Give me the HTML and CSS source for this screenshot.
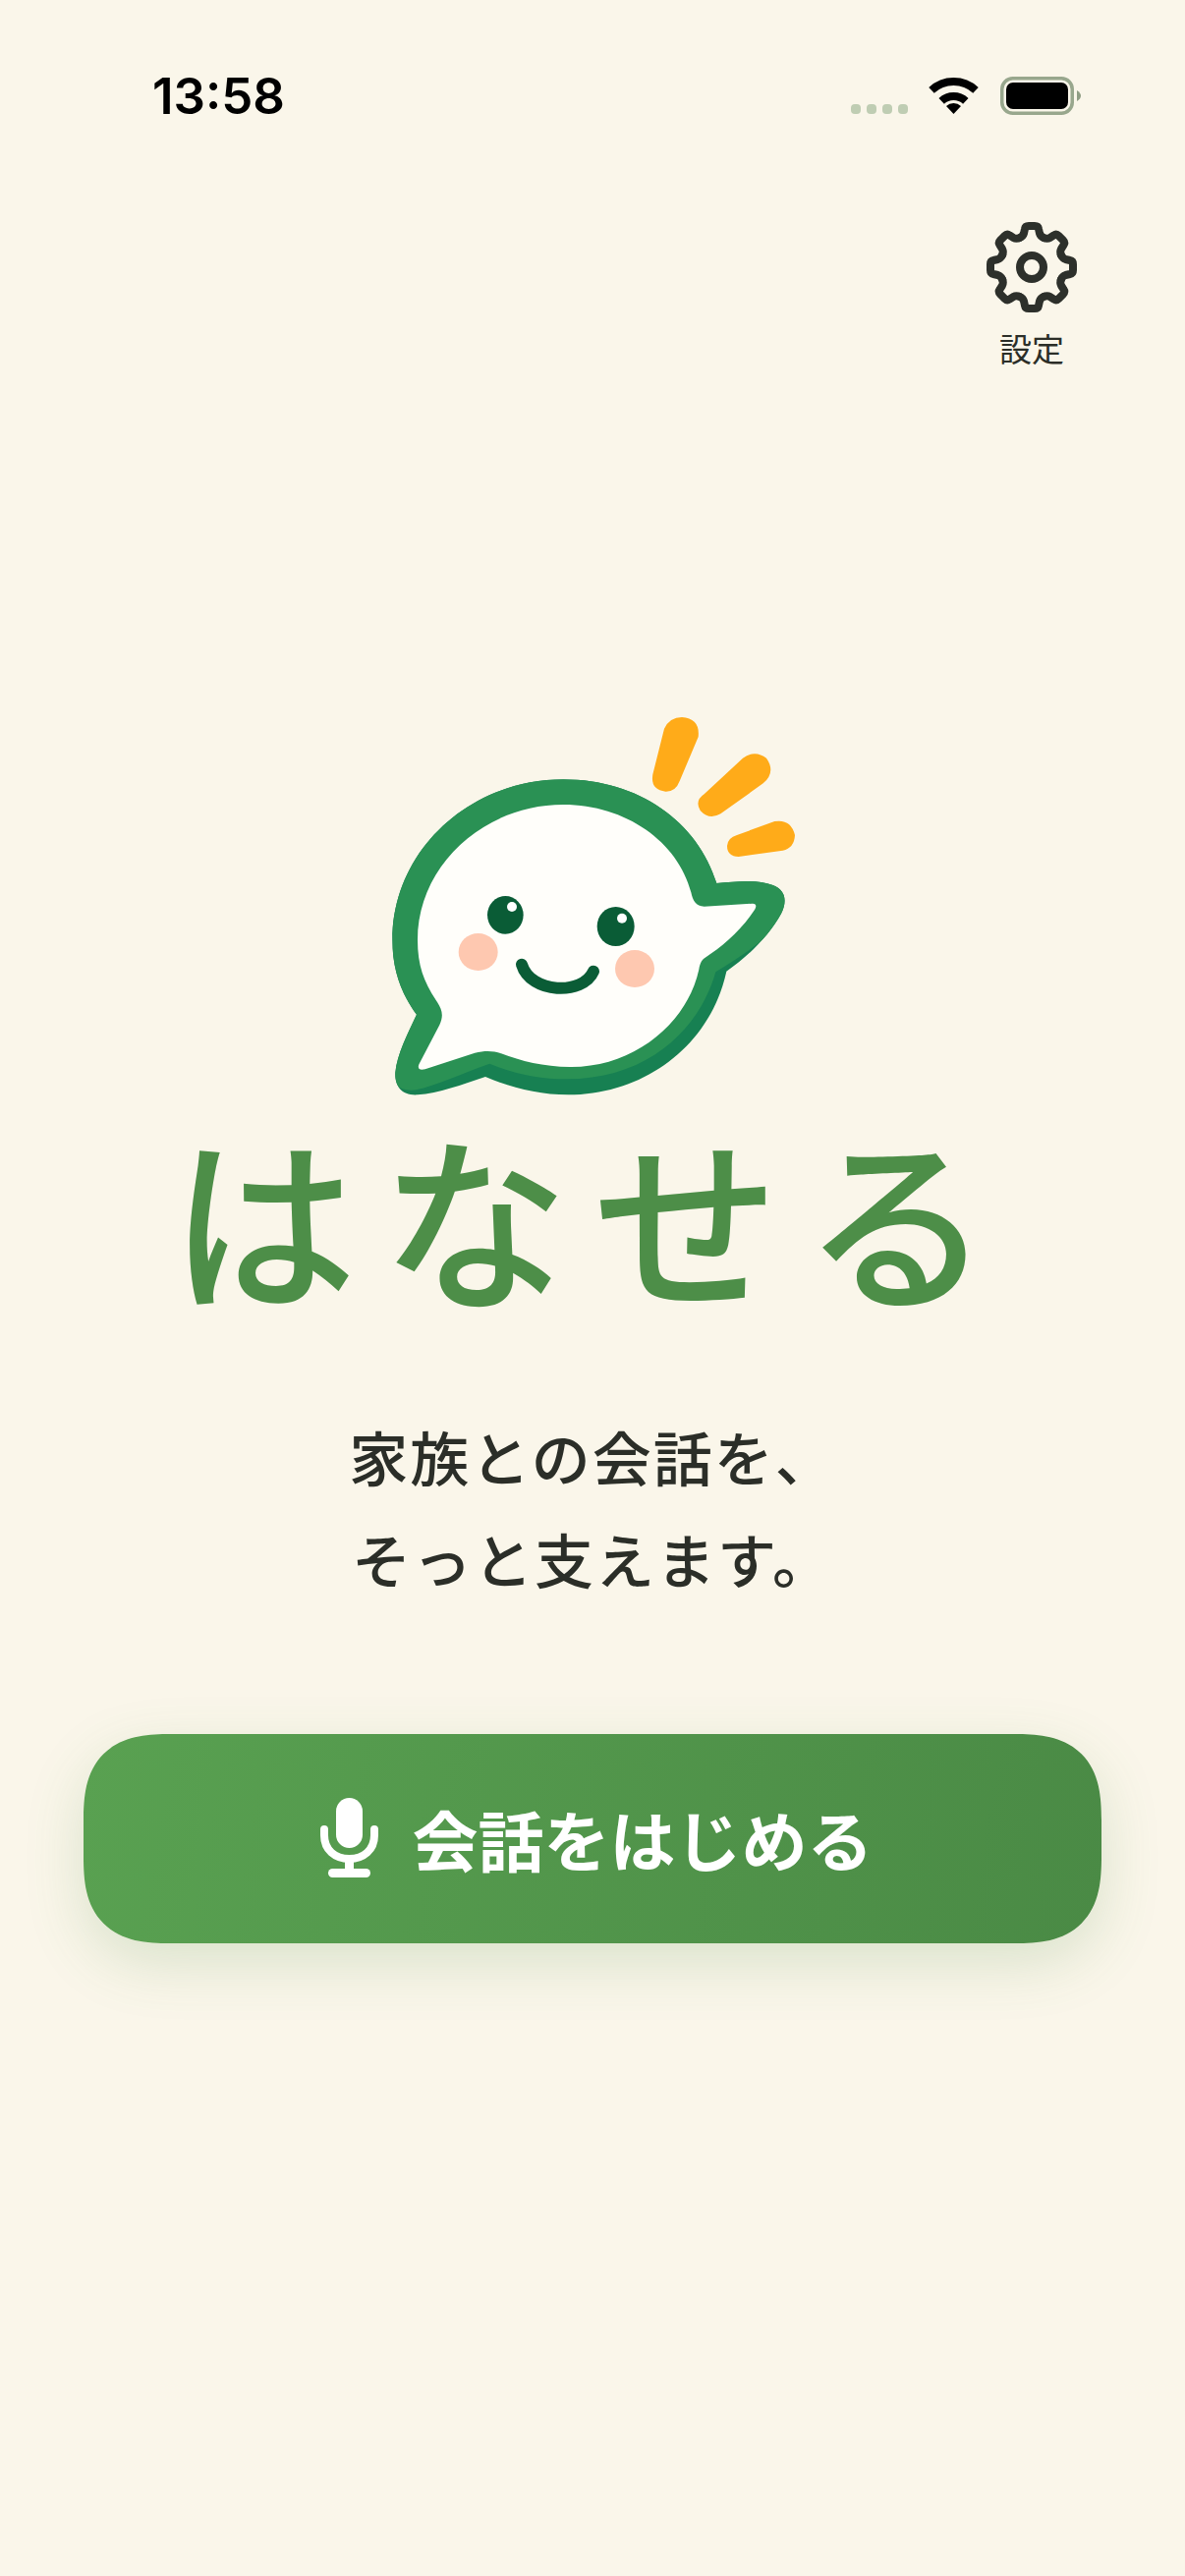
FILE: index.html
```html
<!DOCTYPE html>
<html lang="ja">
<head>
<meta charset="UTF-8">
<meta name="viewport" content="width=device-width, initial-scale=1.0">
<title>はなせる</title>
<link rel="stylesheet" href="styles.css">
</head>
<body>
<div class="screen">
  <div class="status-bar">
    <span class="time">13:58</span>
    <div class="status-icons">
      <div class="signal"><i></i><i></i><i></i><i></i></div>
      <svg class="wifi" viewBox="0 0 51 37">
        <path d="M3 12.9A33 33 0 0 1 48 12.9" fill="none" stroke="#000" stroke-width="8"/>
        <path d="M13.2 23.8A18 18 0 0 1 37.8 23.8" fill="none" stroke="#000" stroke-width="8"/>
        <path d="M25.5 37L18 29A11 11 0 0 1 33 29Z" fill="#000"/>
      </svg>
      <svg class="battery" viewBox="0 0 82 39">
        <rect x="1.75" y="1.75" width="71.5" height="35.5" rx="11" fill="none" stroke="#98a78d" stroke-width="3.5"/>
        <rect x="6" y="6" width="63" height="27" rx="7" fill="#000"/>
        <path d="M78 14Q82 16.500 82 19.500Q82 22.500 78 25Z" fill="#8f9d84"/>
      </svg>
    </div>
  </div>

  <div class="toolbar">
    <button class="settings-btn" type="button">
      <svg class="gear" viewBox="0 0 100 100">
        <defs>
          <path id="tooth" d="M37.600 20.100Q41 18.700 42 15.500L43 11Q43.500 8 47 8L53 8Q56.500 8 57 11L58 15.500Q59 18.700 62.400 20.100"/>
        </defs>
        <g fill="none" stroke="#2d302b" stroke-width="8" stroke-linecap="round" stroke-linejoin="round">
          <use href="#tooth"/>
          <use href="#tooth" transform="rotate(45 50 50)"/>
          <use href="#tooth" transform="rotate(90 50 50)"/>
          <use href="#tooth" transform="rotate(135 50 50)"/>
          <use href="#tooth" transform="rotate(180 50 50)"/>
          <use href="#tooth" transform="rotate(225 50 50)"/>
          <use href="#tooth" transform="rotate(270 50 50)"/>
          <use href="#tooth" transform="rotate(315 50 50)"/>
          <circle cx="50" cy="50" r="12"/>
        </g>
      </svg>
      <span class="settings-label">設定</span>
    </button>
  </div>

  <main class="hero">
    <svg class="logo" viewBox="0 0 1440 1320">
      <defs>
        <path id="bubbleOuter" d="M640 280C870 280 1050 410 1108 597C1170 592 1230 584 1280 603C1318 618 1325 650 1305 690C1270 755 1205 820 1138 866C1090 1090 890 1243 655 1243C565 1243 480 1222 402 1188C330 1212 260 1238 195 1243C145 1246 125 1215 127 1175C132 1120 165 1055 192 998C145 935 118 860 118 770C118 500 350 280 640 280Z"/>
        <clipPath id="bubbleClip"><use href="#bubbleOuter"/></clipPath>
      </defs>
      <path d="M948 125Q965 90 1002 90Q1058 94 1052 150L995 285Q983 318 952 317Q905 312 913 265Z" fill="#ffab19"/>
      <path d="M1188 215Q1225 188 1260 215Q1290 258 1250 292L1120 385Q1085 405 1058 375Q1040 345 1070 325Z" fill="#ffab19"/>
      <path d="M1170 450L1285 408Q1335 400 1347 450Q1345 490 1310 497L1175 516Q1140 515 1140 483Q1142 458 1170 450Z" fill="#ffab19"/>
      <use href="#bubbleOuter" fill="#178052"/>
      <path clip-path="url(#bubbleClip)" d="M100 200H1360V640C1320 730 1200 810 1105 868C1060 1030 910 1195 650 1195C570 1195 490 1180 415 1148C330 1178 250 1215 190 1228C160 1232 140 1225 120 1205Z" fill="#2a9154"/>
      <path d="M640 357C830 357 990 470 1030 625C1035 650 1045 668 1070 668L1218 659C1230 659 1230 668 1224 678C1180 745 1125 790 1072 825C1060 833 1057 845 1054 860C1020 1020 860 1160 660 1158C580 1158 510 1140 450 1117C425 1108 400 1108 370 1115L218 1165C198 1170 194 1160 200 1148L262 1030C275 1000 270 985 255 960C215 900 195 850 195 770C195 540 400 357 640 357Z" fill="#fffefa"/>
      <ellipse cx="463" cy="694" rx="55" ry="58" fill="#0a5c36"/>
      <ellipse cx="800" cy="729" rx="57" ry="60" fill="#0a5c36"/>
      <circle cx="483" cy="669" r="15" fill="#fff"/>
      <circle cx="819" cy="704" r="15" fill="#fff"/>
      <ellipse cx="380" cy="807" rx="60" ry="57" fill="#fec8b0"/>
      <ellipse cx="858" cy="858" rx="60" ry="57" fill="#fec8b0"/>
      <path d="M513 845C540 935 700 940 732 866" fill="none" stroke="#0a5c36" stroke-width="36" stroke-linecap="round"/>
    </svg>
    <h1 class="app-name">はなせる</h1>
    <p class="tagline">家族との会話を、<br>そっと支えます。</p>
    <button class="start-btn" type="button">
      <svg class="mic" viewBox="0 0 59 81">
        <rect x="16" y="0" width="27" height="51" rx="13.500" fill="#fff"/>
        <path d="M4 32V38C4 53 15 62 29.500 62C44 62 55 53 55 38V32" fill="none" stroke="#fff" stroke-width="8" stroke-linecap="round"/>
        <rect x="25" y="62" width="9" height="12" fill="#fff"/>
        <rect x="8" y="72" width="43" height="9" rx="4.500" fill="#fff"/>
      </svg>
      <span>会話をはじめる</span>
    </button>
  </main>
</div>
</body>
</html>
```

FILE: styles.css
```css
* {
  box-sizing: border-box;
}

html, body {
  margin: 0;
  padding: 0;
}

body {
  background-color: #faf6ea;
  color: #2b2e28;
  font-family: "Noto Sans CJK JP", "Noto Sans", sans-serif;
}

.screen {
  width: 1206px;
  height: 2622px;
  overflow: hidden;
  display: flex;
  flex-direction: column;
}

/* status bar */
.status-bar {
  display: flex;
  justify-content: space-between;
  align-items: flex-start;
  padding: 70px 106px 0 155px;
  height: 226px;
}

.time {
  font-family: Inter, "Liberation Sans", sans-serif;
  font-size: 51px;
  font-weight: 600;
  line-height: 56px;
  color: #000;
}

.status-icons {
  display: flex;
  align-items: flex-start;
  margin-top: 8px;
}

.signal {
  display: flex;
  gap: 6px;
  margin-top: 28px;
  margin-right: 21px;
}

.signal i {
  width: 10px;
  height: 10px;
  border-radius: 4px;
  background: #bfcdb3;
}

.wifi {
  width: 51px;
  height: 37px;
  margin-top: 1px;
  margin-right: 22px;
}

.battery {
  width: 82px;
  height: 39px;
}

/* settings */
.toolbar {
  display: flex;
  justify-content: flex-end;
  padding-right: 106px;
}

.settings-btn {
  display: flex;
  flex-direction: column;
  align-items: center;
  padding: 0;
  border: none;
  background: none;
  font-family: inherit;
  color: #2b2e28;
}

.gear {
  width: 100px;
  height: 100px;
  margin-top: -4px;
}

.settings-label {
  font-size: 33px;
  line-height: 40px;
  margin-top: 12px;
}

/* main */
.hero {
  display: flex;
  flex-direction: column;
  align-items: center;
  margin-top: 326px;
}

.logo {
  width: 480px;
  height: 440px;
  margin-right: 6px;
}

.app-name {
  margin: 0;
  margin-top: -13px;
  font-size: 190px;
  font-weight: 500;
  line-height: 220px;
  letter-spacing: 25px;
  color: #4d8e48;
}

.tagline {
  margin: 0;
  margin-top: 83px;
  font-size: 60px;
  font-weight: 500;
  line-height: 104px;
  letter-spacing: 2px;
  text-align: center;
}

.start-btn {
  display: flex;
  align-items: center;
  justify-content: center;
  gap: 35px;
  width: 1036px;
  height: 213px;
  margin-top: 127px;
  padding: 0 0 2px 8px;
  border: none;
  border-radius: 88px;
  corner-shape: superellipse(1.4);
  background: linear-gradient(100deg, #59a151 0%, #4a8a45 100%);
  box-shadow: 0 20px 60px rgba(74, 138, 69, 0.18);
  color: #fff;
  font-family: inherit;
  font-size: 67px;
  font-weight: 700;
}

.mic {
  width: 59px;
  height: 81px;
}
```
